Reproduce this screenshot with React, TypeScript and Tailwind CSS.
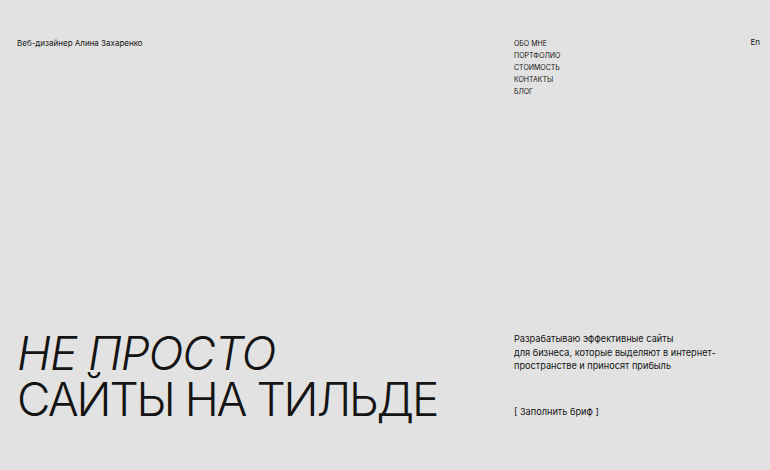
const navItems = ["Обо мне", "Портфолио", "Стоимость", "Контакты", "Блог"]

const App = () => {
    return (
        <div
            className="flex flex-col justify-between h-[470px] w-full bg-[#e2e2e2] text-[#141414] pl-[17px] pr-[10px] pt-[38px] pb-[48px] overflow-hidden"
            style={{ fontFamily: 'Inter, "Noto Sans", sans-serif' }}
        >
            {/* Header */}
            <header className="grid grid-cols-[497px_1fr_auto] items-start">
                <p className="text-[8px] leading-[10px]">Веб-дизайнер Алина Захаренко</p>
                <nav className="flex flex-col">
                    {navItems.map((item) => (
                        <a key={item} className="text-[7px] leading-[12px] uppercase">
                            {item}
                        </a>
                    ))}
                </nav>
                <span className="text-[8px] leading-[8px] pl-[1px]">En</span>
            </header>

            {/* Hero */}
            <section className="grid grid-cols-[497px_1fr] items-start">
                <h1 className="text-[46px] leading-[46px] font-light tracking-[-0.045em] whitespace-nowrap">
                    <span className="italic block tracking-[-0.025em]">НЕ ПРОСТО</span>
                    <span className="block">САЙТЫ НА ТИЛЬДЕ</span>
                </h1>
                <div className="flex flex-col pt-[2px]">
                    <p className="text-[9.2px] leading-[13.5px]">
                        Разрабатываю эффективные сайты
                        <br />
                        для бизнеса, которые выделяют в интернет-
                        <br />
                        пространстве и приносят прибыль
                    </p>
                    <a className="text-[9.2px] leading-[12px] mt-[33px]">[ Заполнить бриф ]</a>
                </div>
            </section>
        </div>
    )
}

export default App
